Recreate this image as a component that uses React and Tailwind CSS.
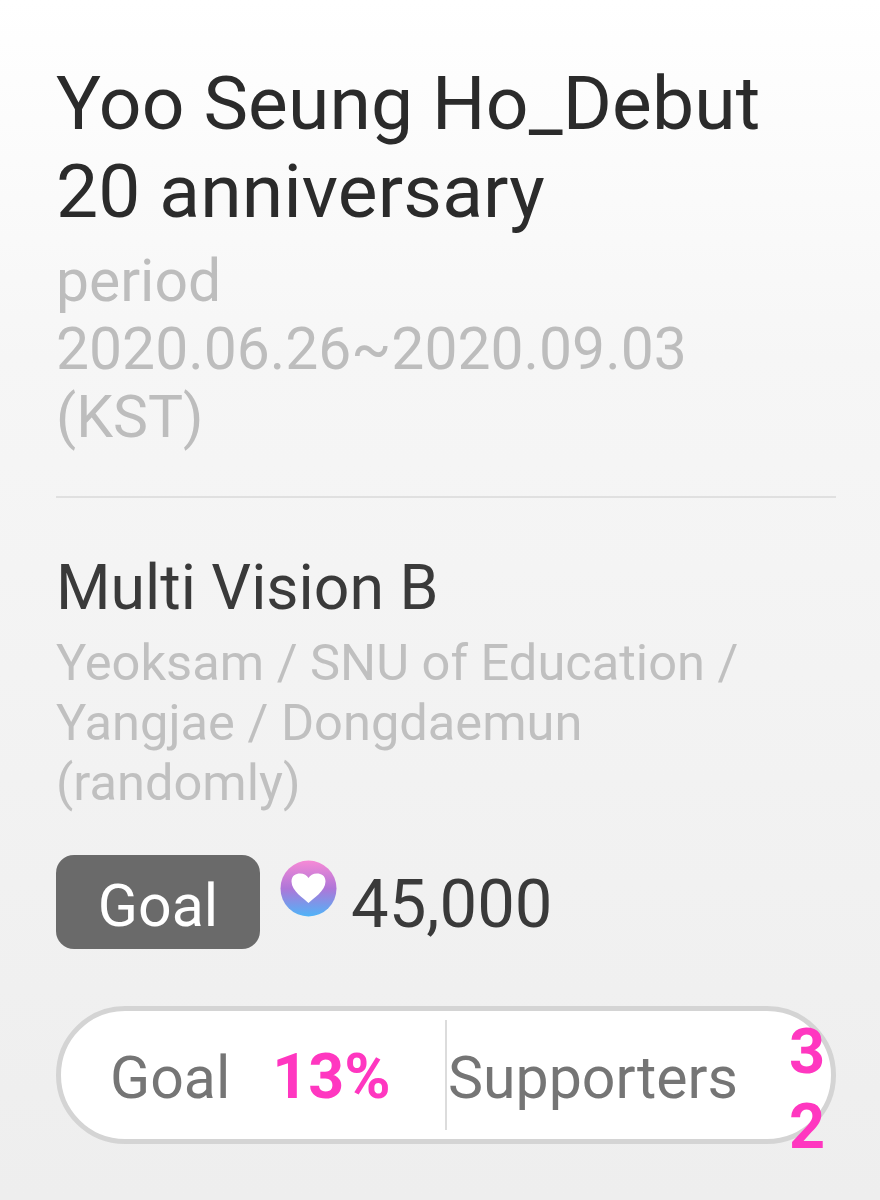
const font = { fontFamily: 'Roboto, sans-serif' };

const HeartCoin = () => (
  <svg width="57" height="57" viewBox="0 0 57 57" className="shrink-0">
    <defs>
      <linearGradient id="coin" x1="0" y1="0" x2="0" y2="1">
        <stop offset="0" stopColor="#f78ad6" />
        <stop offset="0.5" stopColor="#ae76d8" />
        <stop offset="1" stopColor="#4fb4f8" />
      </linearGradient>
    </defs>
    <circle cx="28.5" cy="28.5" r="28" fill="url(#coin)" />
    <path d="M28.5 43 C24 38.5 11.5 31 11.5 21.5 C11.5 15.5 16 13.5 20 13.5 C24 13.5 27 15.5 28.5 18 C30 15.5 33 13.5 37 13.5 C41 13.5 45.5 15.5 45.5 21.5 C45.5 31 33 38.5 28.5 43 Z" fill="#fff" />
  </svg>
);

export default function App() {
  return (
    <div
      className="w-[880px] h-[1200px] overflow-hidden bg-gradient-to-b from-[#ffffff] via-[#f6f6f6] via-30% to-[#eeeeee] pl-14 pr-11 pt-[59px]"
      style={font}
    >
      <h1 className="text-[75px] leading-[88px] tracking-[0.15px] font-normal text-[#2b2b2b] -mr-4">
        Yoo Seung Ho_Debut
        <br />
        20 anniversary
      </h1>
      <div className="mt-[12px] text-[58.8px] leading-[68px] text-[#bdbdbd]">
        period
        <br />
        2020.06.26~2020.09.03
        <br />
        (KST)
      </div>

      <div className="mt-[45px] h-[2px] bg-[#e0e0e0]" />

      <h2 className="mt-[52px] text-[62.5px] leading-[76px] font-normal text-[#3a3a3a]">Multi Vision B</h2>
      <div className="mt-[7px] text-[50.6px] leading-[60px] text-[#c0c0c0]">
        Yeoksam / SNU of Education /
        <br />
        Yangjae / Dongdaemun
        <br />
        (randomly)
      </div>

      <div className="mt-[42px] flex items-start">
        <div className="w-[204px] h-[94px] pt-[6px] rounded-[18px] bg-[#6a6a6a] flex items-center justify-center text-white text-[59px] leading-none">
          Goal
        </div>
        <div className="ml-[20px] mt-[5px]">
          <HeartCoin />
        </div>
        <div className="ml-[14px] mt-[11px] text-[67px] leading-[76px] text-[#3a3a3a]">45,000</div>
      </div>

      <div className="mt-[57px] h-[138px] w-[780px] rounded-[69px] border-[5px] border-[#d4d4d4] bg-white flex items-center">
        <div className="w-[386px] h-[110px] pt-[5px] flex items-center border-r-2 border-[#dcdcdc] pl-[49px]">
          <span className="text-[59px] text-[#757575] leading-none">Goal</span>
          <span className="ml-[42px] text-[62.7px] font-bold text-[#ff37c0] leading-none">13%</span>
        </div>
        <span className="ml-[1px] mt-[5px] text-[59px] text-[#757575] leading-none">Supporters</span>
        <div className="ml-[51px] mt-[28px] w-[36px] text-[63px] leading-[75px] font-bold text-[#ff37c0] break-all">32</div>
      </div>
    </div>
  );
}
